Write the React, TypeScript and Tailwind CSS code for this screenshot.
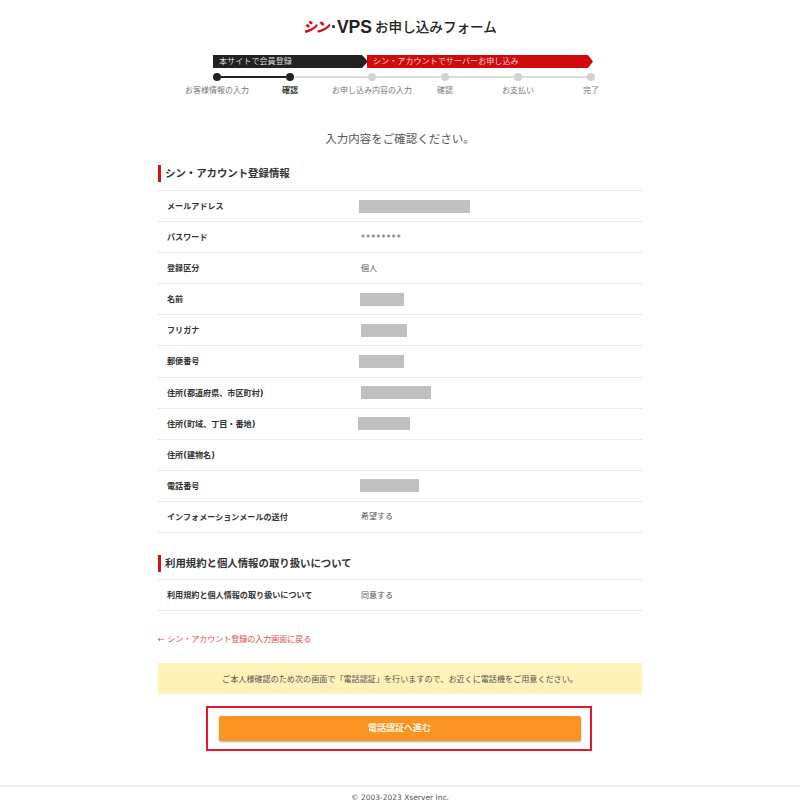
const accountRows = [
  { label: "メールアドレス", blank: "w-[111px] ml-[-2px]" },
  { label: "パスワード", value: "********", wide: true },
  { label: "登録区分", value: "個人" },
  { label: "名前", blank: "w-[44px] ml-[-1px]" },
  { label: "フリガナ", blank: "w-[46px]" },
  { label: "郵便番号", blank: "w-[45px] ml-[-2px]" },
  { label: "住所(都道府県、市区町村)", blank: "w-[70px]" },
  { label: "住所(町域、丁目・番地)", blank: "w-[52px] ml-[-3px]" },
  { label: "住所(建物名)" },
  { label: "電話番号", blank: "w-[59px] ml-[-1px]" },
  { label: "インフォメーションメールの送付", value: "希望する" },
];

const steps = [
  { label: "お客様情報の入力", cell: "w-[73px]" },
  { label: "確認", cell: "w-[73px] font-bold text-[#333]" },
  { label: "お申し込み内容の入力", cell: "w-[73px] ml-[9px]" },
  { label: "確認", cell: "w-[73px]" },
  { label: "お支払い", cell: "w-[73px]" },
  { label: "完了", cell: "w-[73px]" },
];

function Heading({ children }: { children: string }) {
  return (
    <h2 className="border-l-[3px] border-[#d0121b] pl-[4px] text-[10.4px] leading-[17px] font-bold text-[#333]">
      {children}
    </h2>
  );
}

function Row({ label, value, blank, wide }: { label: string; value?: string; blank?: string; wide?: boolean }) {
  return (
    <div className="flex h-[31.1px] items-center border-b border-[#e8e8e8] pl-[9px]">
      <div className="w-[194px] shrink-0 text-[8.1px] font-bold text-[#333]">{label}</div>
      {value && (
        <div className={wide ? "pt-[3px] text-[8px] tracking-[1.1px] text-[#555]" : "pt-[1px] text-[8px] text-[#555]"}>{value}</div>
      )}
      {blank && <div className={`h-[13px] bg-[#c0c0c0] ${blank}`} />}
    </div>
  );
}

function Stepper() {
  return (
    <div className="mx-auto mt-[18px] w-[460px]">
      <div className="ml-[43px] flex h-[13px] w-[380px] text-[8.1px] leading-[13px]">
        <div className="w-[155px] bg-[#222] pl-[6px] text-[#ddd] [clip-path:polygon(0_0,149px_0,155px_50%,149px_100%,0_100%)]">
          本サイトで会員登録
        </div>
        <div className="ml-[-1px] flex-1 bg-[#d00a0f] pl-[6px] text-[#f3d0d0] [clip-path:polygon(0_0,calc(100%-5px)_0,100%_50%,calc(100%-5px)_100%,0_100%)]">
          シン・アカウントでサーバーお申し込み
        </div>
      </div>
      <div className="mt-[5px] ml-[43px] flex items-center">
        <span className="h-[8px] w-[8px] rounded-full bg-[#222]" />
        <span className="h-[2px] w-[65px] bg-[#222]" />
        <span className="h-[8px] w-[8px] rounded-full bg-[#222]" />
        <span className="h-[2px] w-[74px] bg-[#ddd]" />
        <span className="h-[8px] w-[8px] rounded-full bg-[#d2d2d2]" />
        <span className="h-[2px] w-[65px] bg-[#ddd]" />
        <span className="h-[8px] w-[8px] rounded-full bg-[#d2d2d2]" />
        <span className="h-[2px] w-[65px] bg-[#ddd]" />
        <span className="h-[8px] w-[8px] rounded-full bg-[#d2d2d2]" />
        <span className="h-[2px] w-[65px] bg-[#ddd]" />
        <span className="h-[8px] w-[8px] rounded-full bg-[#d2d2d2]" />
      </div>
      <div className="mt-[4px] ml-[10.5px] flex whitespace-nowrap text-[8px] leading-[12px] text-[#777]">
        {steps.map((step, i) => (
          <div key={i} className={`flex shrink-0 justify-center ${step.cell}`}>
            {step.label}
          </div>
        ))}
      </div>
    </div>
  );
}

export default function App() {
  return (
    <div className="flex h-[808px] w-[800px] flex-col overflow-hidden bg-white font-['DejaVu_Sans','Noto_Sans_CJK_JP',sans-serif]">
      <header className="flex h-[37px] items-end justify-center text-[#222]">
        <span className="text-[14px] leading-[20px] font-black tracking-[-1.5px] text-[#d00a0f] italic">シン</span>
        <span className="ml-[3px] font-['Liberation_Sans','Noto_Sans_CJK_JP',sans-serif] text-[17.5px] leading-[20px] font-bold">·VPS</span>
        <span className="ml-[3px] text-[13.6px] leading-[20px] font-medium">お申し込みフォーム</span>
      </header>

      <Stepper />

      <p className="mt-[33px] text-center text-[11.5px] leading-[18px] text-[#555]">入力内容をご確認ください。</p>

      <main className="mx-auto mt-[17px] w-[484px]">
        <Heading>シン・アカウント登録情報</Heading>
        <div className="mt-[8px] border-t border-[#e8e8e8]">
          {accountRows.map((row) => (
            <Row key={row.label} {...row} />
          ))}
        </div>

        <div className="mt-[22px]">
          <Heading>利用規約と個人情報の取り扱いについて</Heading>
        </div>
        <div className="mt-[7px] border-t border-[#e8e8e8]">
          <Row label="利用規約と個人情報の取り扱いについて" value="同意する" />
        </div>

        <a className="mt-[22px] block text-[8px] leading-[14px] text-[#dc4a50]">← シン・アカウント登録の入力画面に戻る</a>

        <div className="mt-[16px] flex h-[31px] items-center justify-center bg-[#fff1b8] text-[8.1px] text-[#555]">
          ご本人様確認のため次の画面で「電話認証」を行いますので、お近くに電話機をご用意ください。
        </div>

        <div className="mt-[12px] ml-[48px] flex h-[45px] w-[386px] items-center justify-center border-2 border-[#e8182c]">
          <button className="ml-[1px] h-[25px] w-[362px] rounded-[2px] bg-[#f99321] text-[9px] font-bold text-[#fff4e0] shadow-[0_1px_2px_rgba(0,0,0,0.35)]">
            電話認証へ進む
          </button>
        </div>
      </main>

      <footer className="mt-auto border-t-2 border-[#eee] pt-[5px] pb-[4px] text-center text-[7.5px] leading-[12px] text-[#555]">
        © 2003-2023 Xserver Inc.
      </footer>
    </div>
  );
}
